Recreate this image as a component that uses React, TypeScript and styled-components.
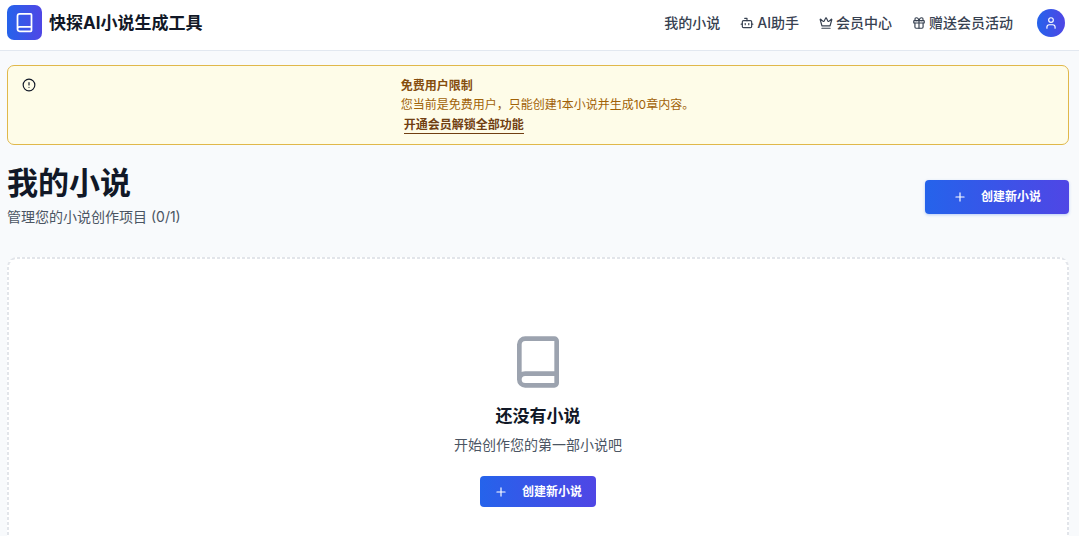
import React from "react";
import styled, { createGlobalStyle, css } from "styled-components";
import { Book, Bot, CircleAlert, Crown, Gift, Plus, User } from "lucide-react";

const GlobalStyle = createGlobalStyle`
  *, *::before, *::after { box-sizing: border-box; }
  html { scrollbar-width: none; }
  body {
    margin: 0;
    background: #f8fafc;
    color: #111827;
    font-family: Inter, "Noto Sans CJK SC", sans-serif;
    font-size: 14px;
    line-height: 20px;
  }
  h1, h2, h3, p { margin: 0; }
  button { font-family: inherit; cursor: pointer; }
  a { color: inherit; text-decoration: none; }
  svg { flex: none; display: block; }
`;

const brandGradient = css`
  background: linear-gradient(to right, #2563eb, #4f46e5);
  color: #fff;
`;

const Header = styled.header`
  display: flex;
  align-items: center;
  justify-content: space-between;
  height: 51px;
  padding: 0 14px 5px 7px;
  background: #fff;
  border-bottom: 1px solid #e2e8f0;
`;

const Brand = styled.a`
  display: flex;
  align-items: center;
  gap: 7px;
  font-size: 17px;
  line-height: 24px;
  font-weight: 700;
`;

const BrandMark = styled.span`
  display: grid;
  place-items: center;
  width: 35px;
  height: 35px;
  border-radius: 7px;
  ${brandGradient}
`;

const Nav = styled.nav`
  display: flex;
  align-items: center;
  gap: 20px;
`;

const NavLink = styled.a`
  display: flex;
  align-items: center;
  gap: 3px;
  color: #374151;
  font-weight: 500;
  white-space: nowrap;
`;

const Avatar = styled.button`
  display: grid;
  place-items: center;
  width: 28px;
  height: 28px;
  margin-left: 4px;
  padding: 0;
  border: 0;
  border-radius: 50%;
  ${brandGradient}
`;

const Main = styled.main`
  padding: 14px 10px 28px 7px;
`;

const Alert = styled.section`
  display: grid;
  grid-template-columns: auto auto;
  column-gap: 5px;
  padding: 10px 14px;
  background: #fefce8;
  border: 1px solid #e0b84a;
  border-radius: 7px;
  color: #a16207;
  font-size: 12px;
  line-height: 19px;

  > svg {
    margin-top: 2px;
    color: #111827;
  }
`;

const AlertTitle = styled.h2`
  font-size: 12px;
  line-height: 19px;
  font-weight: 600;
  color: #854d0e;
`;

const AlertLink = styled.a`
  display: inline-block;
  margin: 3px 3px 0;
  line-height: 16px;
  font-weight: 600;
  color: #713f12;
  border-bottom: 1px solid currentColor;
`;

const PageHead = styled.div`
  display: flex;
  align-items: center;
  justify-content: space-between;
  padding: 19px 0 28px;
`;

const PageTitle = styled.h1`
  font-size: 31px;
  line-height: 38px;
  font-weight: 700;
`;

const Muted = styled.p`
  color: #4b5563;
  line-height: 24px;
  padding-top: 3px;
`;

const CreateButton = styled.button<{ $large?: boolean }>`
  display: inline-flex;
  align-items: center;
  gap: 14px;
  height: ${(p) => (p.$large ? 34 : 31)}px;
  padding: 0 ${(p) => (p.$large ? 28 : 14)}px;
  border: 0;
  border-radius: 4px;
  font-size: 12px;
  line-height: 16px;
  font-weight: 600;
  white-space: nowrap;
  box-shadow: ${(p) => (p.$large ? "0 1px 3px rgba(37, 99, 235, 0.3)" : "none")};
  ${brandGradient}
`;

/* Short dashes are striped under a transparent border; the browser's own are longer. */
const EmptyCard = styled.section`
  display: flex;
  flex-direction: column;
  align-items: center;
  padding: 75px 20px;
  border: 2px solid transparent;
  border-radius: 10px;
  background:
    linear-gradient(#fff, #fff) padding-box,
    repeating-linear-gradient(to bottom, #e2e5ea 0 3px, #fff 3px 5px) left / 6px 100% no-repeat border-box,
    repeating-linear-gradient(to bottom, #e2e5ea 0 3px, #fff 3px 5px) right / 6px 100% no-repeat border-box,
    repeating-linear-gradient(to right, #e2e5ea 0 3px, #fff 3px 5px) border-box;

  > svg { color: #9ca3af; }
`;

const EmptyTitle = styled.h3`
  margin-top: 14px;
  font-size: 17px;
  line-height: 24px;
  font-weight: 600;
`;

const EmptyText = styled.p`
  margin: 7px 0 21px;
  color: #4b5563;
`;

const navItems = [
  { label: "我的小说" },
  { label: "AI助手", icon: Bot },
  { label: "会员中心", icon: Crown },
  { label: "赠送会员活动", icon: Gift },
];

function CreateNovel({ large }: { large?: boolean }) {
  return (
    <CreateButton type="button" $large={large}>
      <Plus size={14} />
      创建新小说
    </CreateButton>
  );
}

export default function App() {
  return (
    <>
      <GlobalStyle />
      <Header>
        <Brand href="#">
          <BrandMark>
            <Book size={21} />
          </BrandMark>
          快探AI小说生成工具
        </Brand>
        <Nav>
          {navItems.map(({ label, icon: Icon }) => (
            <NavLink href="#" key={label}>
              {Icon && <Icon size={14} />}
              {label}
            </NavLink>
          ))}
          <Avatar type="button" aria-label="用户">
            <User size={14} />
          </Avatar>
        </Nav>
      </Header>
      <Main>
        <Alert>
          <CircleAlert size={14} />
          <div>
            <AlertTitle>免费用户限制</AlertTitle>
            <p>您当前是免费用户，只能创建1本小说并生成10章内容。</p>
            <AlertLink href="#">开通会员解锁全部功能</AlertLink>
          </div>
        </Alert>
        <PageHead>
          <div>
            <PageTitle>我的小说</PageTitle>
            <Muted>管理您的小说创作项目 (0/1)</Muted>
          </div>
          <CreateNovel large />
        </PageHead>
        <EmptyCard>
          <Book size={56} />
          <EmptyTitle>还没有小说</EmptyTitle>
          <EmptyText>开始创作您的第一部小说吧</EmptyText>
          <CreateNovel />
        </EmptyCard>
      </Main>
    </>
  );
}
